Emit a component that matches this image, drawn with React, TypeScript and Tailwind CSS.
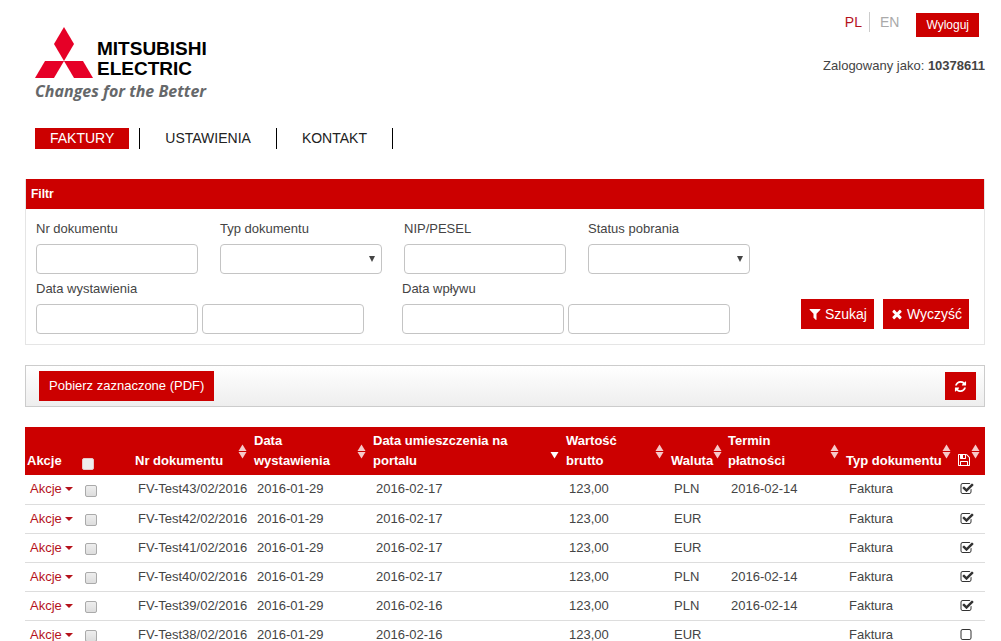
import { ReactNode } from "react";
import { clsx } from "clsx";

const ICONS = {
  filter:
    "M1595 295q17 41-14 70l-493 493v742q0 42-39 59-13 5-25 5-27 0-45-19l-256-256q-19-19-19-45v-486l-493-493q-31-29-14-70 17-39 59-39h1280q42 0 59 39z",
  times:
    "M1490 1322q0 40-28 68l-136 136q-28 28-68 28t-68-28l-294-294-294 294q-28 28-68 28t-68-28l-136-136q-28-28-28-68t28-68l294-294-294-294q-28-28-28-68t28-68l136-136q28-28 68-28t68 28l294 294 294-294q28-28 68-28t68 28l136 136q28 28 28 68t-28 68l-294 294 294 294q28 28 28 68z",
  refresh:
    "M1639 1056q0 5-1 7-64 268-268 434.5t-478 166.5q-146 0-282.5-55t-243.5-157l-129 129q-19 19-45 19t-45-19-19-45v-448q0-26 19-45t45-19h448q26 0 45 19t19 45-19 45l-137 137q71 66 161 102t187 36q134 0 250-65t186-179q11-17 53-117 8-23 30-23h192q13 0 22.5 9.5t9.5 22.5zm25-800v448q0 26-19 45t-45 19h-448q-26 0-45-19t-19-45 19-45l138-138q-148-137-349-137-134 0-250 65t-186 179q-11 17-53 117-8 23-30 23h-199q-13 0-22.5-9.5t-9.5-22.5v-7q65-268 270-434.5t480-166.5q146 0 284 55.5t245 156.5l130-129q19-19 45-19t45 19 19 45z",
  save: "M512 1536h768v-384h-768v384zm896 0h128v-896q0-14-10-38.5t-20-34.5l-281-281q-10-10-34-20t-39-10v416q0 40-28 68t-68 28h-576q-40 0-68-28t-28-68v-416h-128v1280h128v-416q0-40 28-68t68-28h832q40 0 68 28t28 68v416zm-384-928v-320q0-13-9.5-22.5t-22.5-9.5h-192q-13 0-22.5 9.5t-9.5 22.5v320q0 13 9.5 22.5t22.5 9.5h192q13 0 22.5-9.5t9.5-22.5zm640 32v928q0 40-28 68t-68 28h-1344q-40 0-68-28t-28-68v-1344q0-40 28-68t68-28h928q40 0 88 20t76 48l280 280q28 28 48 76t20 88z",
  checked:
    "M1472 930v318q0 119-84.5 203.5t-203.5 84.5h-832q-119 0-203.5-84.5t-84.5-203.5v-832q0-119 84.5-203.5t203.5-84.5h832q63 0 117 25 15 7 18 23 3 17-9 29l-49 49q-10 10-23 10-3 0-9-2-23-6-45-6h-832q-66 0-113 47t-47 113v832q0 66 47 113t113 47h832q66 0 113-47t47-113v-254q0-13 9-22l64-64q10-10 23-10 6 0 12 3 20 8 20 29zm231-489l-814 814q-24 24-57 24t-57-24l-430-430q-24-24-24-57t24-57l110-110q24-24 57-24t57 24l263 263 647-647q24-24 57-24t57 24l110 110q24 24 24 57t-24 57z",
  unchecked:
    "M1184 256h-832q-66 0-113 47t-47 113v832q0 66 47 113t113 47h832q66 0 113-47t47-113v-832q0-66-47-113t-113-47zm288 160v832q0 119-84.5 203.5t-203.5 84.5h-832q-119 0-203.5-84.5t-84.5-203.5v-832q0-119 84.5-203.5t203.5-84.5h832q119 0 203.5 84.5t84.5 203.5z",
};

function Icon({ name, className }: { name: keyof typeof ICONS; className?: string }) {
  return (
    <svg
      viewBox="0 0 1792 1792"
      fill="currentColor"
      aria-hidden="true"
      className={clsx("shrink-0", className)}
    >
      <path d={ICONS[name]} />
    </svg>
  );
}

type Sort = "both" | "desc";

function SortArrows({ sort }: { sort: Sort }) {
  return (
    <svg viewBox="0 0 9 15" aria-hidden="true" className="h-[15px] w-[9px] shrink-0">
      {sort === "both" && (
        <>
          <path d="M4.5 0.5L8.5 7H0.5z" fill="#f7c9c9" />
          <path d="M0.5 8H8.5L4.5 14.5z" fill="#f7c9c9" />
        </>
      )}
      {sort === "desc" && <path d="M0.5 8H8.5L4.5 14.5z" fill="#fff" />}
    </svg>
  );
}

interface HeaderCellProps {
  children: ReactNode;
  sort?: Sort;
}

function HeaderCell({ children, sort }: HeaderCellProps) {
  return (
    <th className="h-12 py-1 pl-0.5 text-left font-bold">
      <div className="flex h-10 items-center justify-between pr-[5px]">
        <span className="self-end whitespace-nowrap">{children}</span>
        {sort && <SortArrows sort={sort} />}
      </div>
    </th>
  );
}

function Logo() {
  return (
    <div className="w-[180px]">
      <div className="flex items-end gap-1">
        <svg viewBox="0 0 58 52" aria-hidden="true" className="h-[52px] w-[58px]" fill="#e60027">
          <path d="M29 0L39 17L29 34L19 17z" />
          <path d="M29 34L19 51H0L10 34z" />
          <path d="M29 34H48L58 51H39z" />
        </svg>
        <div className="text-[19px] leading-5 font-bold text-black">
          <div>MITSUBISHI</div>
          <div>ELECTRIC</div>
        </div>
      </div>
      <div className="font-['Open_Sans',sans-serif] text-base leading-6 font-bold whitespace-nowrap text-[#66686a] italic">
        Changes for the Better
      </div>
    </div>
  );
}

const NAV = ["FAKTURY", "USTAWIENIA", "KONTAKT"];

const inputClass =
  "h-[30px] w-[162px] rounded border border-[#c4c4c4] bg-white px-2 text-[13px] outline-none";

function Field({ id, label, select }: { id: string; label: string; select?: boolean }) {
  return (
    <div className="flex w-[162px] flex-col gap-[5px]">
      <label htmlFor={id}>{label}</label>
      {select ? (
        <div className="relative">
          <select id={id} className={clsx(inputClass, "block appearance-none")} defaultValue="">
            <option value=""></option>
          </select>
          <svg
            viewBox="0 0 6 6"
            aria-hidden="true"
            className="pointer-events-none absolute top-3 right-[7px] size-1.5"
          >
            <path d="M0 0H6L3 6z" fill="#444" />
          </svg>
        </div>
      ) : (
        <input id={id} type="text" className={inputClass} />
      )}
    </div>
  );
}

function DateRange({ id, label }: { id: string; label: string }) {
  return (
    <div className="flex flex-col gap-[5px]">
      <label htmlFor={id}>{label}</label>
      <div className="flex gap-1">
        <input id={id} type="text" className={inputClass} />
        <input type="text" aria-label={`${label} do`} className={inputClass} />
      </div>
    </div>
  );
}

const INVOICES = [
  { nr: 43, portal: "2016-02-17", currency: "PLN", due: "2016-02-14", saved: true },
  { nr: 42, portal: "2016-02-17", currency: "EUR", due: "", saved: true },
  { nr: 41, portal: "2016-02-17", currency: "EUR", due: "", saved: true },
  { nr: 40, portal: "2016-02-17", currency: "PLN", due: "2016-02-14", saved: true },
  { nr: 39, portal: "2016-02-16", currency: "PLN", due: "2016-02-14", saved: true },
  { nr: 38, portal: "2016-02-16", currency: "EUR", due: "", saved: false },
];

export default function App() {
  return (
    <div className="h-screen overflow-hidden bg-white pr-4 pl-[25px] font-['Liberation_Sans',Arial,sans-serif] text-[13px] leading-5 text-[#444]">
      <header className="flex justify-between">
        <div className="pt-[27px] pl-[10px]">
          <Logo />
        </div>
        <div className="flex flex-col items-end gap-[19px] pt-3">
          <div className="flex items-start pr-1.5">
            <a href="#pl" className="border-r border-[#ccc] pr-[7px] text-sm leading-5 text-[#b5121b]">
              PL
            </a>
            <a href="#en" className="pl-2.5 text-sm leading-5 text-[#aaa]">
              EN
            </a>
            <button
              type="button"
              className="mt-px ml-[17px] h-6 bg-[#c00] px-2.5 text-xs text-white"
            >
              Wyloguj
            </button>
          </div>
          <p>
            Zalogowany jako: <b>10378611</b>
          </p>
        </div>
      </header>

      <nav className="pt-[25px]">
        <ul className="flex text-sm leading-[21px] text-[#222]">
          {NAV.map((item, i) => (
            <li key={item} className="border-r border-black px-2.5">
              <a
                href={`#${item.toLowerCase()}`}
                className={clsx("block px-[15px]", i === 0 && "bg-[#c00] text-white")}
              >
                {item}
              </a>
            </li>
          ))}
        </ul>
      </nav>

      <form className="mt-[30px] border border-t-0 border-[#e5e5e5]">
        <h2 className="bg-[#c00] px-[5px] text-xs leading-[30px] font-bold text-white">Filtr</h2>
        <div className="flex flex-col gap-[5px] pt-2.5 pr-[15px] pb-2.5 pl-2.5">
          <div className="flex gap-[22px]">
            <Field id="nr" label="Nr dokumentu" />
            <Field id="typ" label="Typ dokumentu" select />
            <Field id="nip" label="NIP/PESEL" />
            <Field id="status" label="Status pobrania" select />
          </div>
          <div className="flex items-end">
            <div className="flex gap-[38px]">
              <DateRange id="wystawienie" label="Data wystawienia" />
              <DateRange id="wplyw" label="Data wpływu" />
            </div>
            <div className="mb-[5px] ml-auto flex gap-[9px] text-sm text-white">
              <button
                type="submit"
                className="flex h-[30px] items-center gap-[3px] bg-[#c00] px-[7px]"
              >
                <Icon name="filter" className="size-3.5" />
                Szukaj
              </button>
              <button
                type="reset"
                className="flex h-[30px] items-center gap-[3px] bg-[#c00] px-[7px]"
              >
                <Icon name="times" className="size-3.5" />
                Wyczyść
              </button>
            </div>
          </div>
        </div>
      </form>

      <div className="mt-5 flex h-[42px] items-center justify-between border border-[#ccc] bg-gradient-to-b from-white to-[#eee] pr-2 pl-[13px]">
        <button type="button" className="h-[30px] bg-[#c00] px-2.5 text-white">
          Pobierz zaznaczone (PDF)
        </button>
        <button
          type="button"
          aria-label="Odśwież"
          className="flex h-7 w-[31px] items-center justify-center bg-[#c00] text-white"
        >
          <Icon name="refresh" className="size-[13px]" />
        </button>
      </div>

      <table className="mt-5 w-full table-fixed border-collapse">
        <colgroup>
          <col className="w-[55px]" />
          <col className="w-[53px]" />
          <col className="w-[119px]" />
          <col className="w-[119px]" />
          <col className="w-[193px]" />
          <col className="w-[105px]" />
          <col className="w-[57px]" />
          <col className="w-[118px]" />
          <col className="w-[111px]" />
          <col className="w-[30px]" />
        </colgroup>
        <thead className="bg-[#c00] text-white">
          <tr>
            <HeaderCell>Akcje</HeaderCell>
            <HeaderCell>
              <input
                type="checkbox"
                aria-label="Zaznacz wszystkie"
                className="mb-px block size-3 appearance-none rounded-xs border border-[#e8c8c8] bg-[#eee]"
              />
            </HeaderCell>
            <HeaderCell sort="both">Nr dokumentu</HeaderCell>
            <HeaderCell sort="both">
              Data
              <br />
              wystawienia
            </HeaderCell>
            <HeaderCell sort="desc">
              Data umieszczenia na
              <br />
              portalu
            </HeaderCell>
            <HeaderCell sort="both">
              Wartość
              <br />
              brutto
            </HeaderCell>
            <HeaderCell sort="both">Waluta</HeaderCell>
            <HeaderCell sort="both">
              Termin
              <br />
              płatności
            </HeaderCell>
            <HeaderCell sort="both">Typ dokumentu</HeaderCell>
            <HeaderCell sort="both">
              <Icon name="save" className="mb-1 size-3.5" />
            </HeaderCell>
          </tr>
        </thead>
        <tbody>
          {INVOICES.map((invoice) => (
            <tr
              key={invoice.nr}
              className="h-[29px] border-b border-[#ddd] whitespace-nowrap [&>td]:px-[5px] [&>td]:py-0"
            >
              <td>
                <button type="button" className="flex items-center gap-[3px] text-[#b5121b]">
                  Akcje
                  <svg viewBox="0 0 8 4" aria-hidden="true" className="h-1 w-2" fill="currentColor">
                    <path d="M0 0H8L4 4z" />
                  </svg>
                </button>
              </td>
              <td>
                <input
                  type="checkbox"
                  aria-label={`Zaznacz FV-Test${invoice.nr}/02/2016`}
                  className="mt-[3px] block size-3 appearance-none rounded-xs border border-[#aaa] bg-gradient-to-b from-[#eee] to-[#ddd]"
                />
              </td>
              <td>FV-Test{invoice.nr}/02/2016</td>
              <td>2016-01-29</td>
              <td>{invoice.portal}</td>
              <td>123,00</td>
              <td>{invoice.currency}</td>
              <td>{invoice.due}</td>
              <td>Faktura</td>
              <td>
                <Icon
                  name={invoice.saved ? "checked" : "unchecked"}
                  className="size-3.5 text-[#333]"
                />
              </td>
            </tr>
          ))}
        </tbody>
      </table>
    </div>
  );
}
